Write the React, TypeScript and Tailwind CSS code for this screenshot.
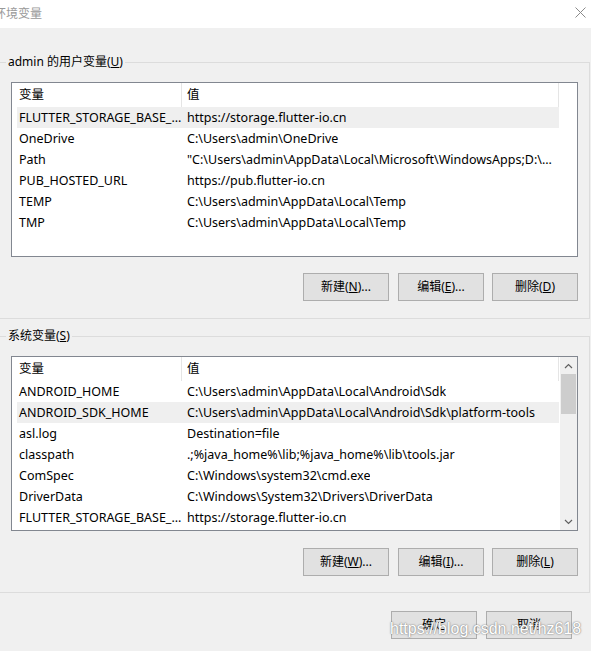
import React from "react";

type Row = [string, string, boolean?];

const rows1: Row[] = [
  ["FLUTTER_STORAGE_BASE_...", "https://storage.flutter-io.cn", true],
  ["OneDrive", "C:\\Users\\admin\\OneDrive"],
  ["Path", "\"C:\\Users\\admin\\AppData\\Local\\Microsoft\\WindowsApps;D:\\..."],
  ["PUB_HOSTED_URL", "https://pub.flutter-io.cn"],
  ["TEMP", "C:\\Users\\admin\\AppData\\Local\\Temp"],
  ["TMP", "C:\\Users\\admin\\AppData\\Local\\Temp"],
];

const rows2: Row[] = [
  ["ANDROID_HOME", "C:\\Users\\admin\\AppData\\Local\\Android\\Sdk"],
  ["ANDROID_SDK_HOME", "C:\\Users\\admin\\AppData\\Local\\Android\\Sdk\\platform-tools", true],
  ["asl.log", "Destination=file"],
  ["classpath", ".;%java_home%\\lib;%java_home%\\lib\\tools.jar"],
  ["ComSpec", "C:\\Windows\\system32\\cmd.exe"],
  ["DriverData", "C:\\Windows\\System32\\Drivers\\DriverData"],
  ["FLUTTER_STORAGE_BASE_...", "https://storage.flutter-io.cn"],
];

function Btn({ children }: { children: React.ReactNode }) {
  return (
    <div className="w-[86px] h-[28px] shrink-0 border border-[#adadad] bg-[#e1e1e1] flex items-center justify-center text-[12px] leading-none text-black">
      {children}
    </div>
  );
}

function List({ rows, scroll }: { rows: Row[]; scroll?: boolean }) {
  return (
    <div className="w-[567px] h-[175px] border border-[#828790] bg-white flex overflow-hidden">
      <div className="w-[547px] shrink-0 flex flex-col">
        <div className="h-[24px] shrink-0 flex border-r border-[#e5e5e5] w-[547px]">
          <div className="w-[170px] shrink-0 border-r border-[#e5e5e5] pl-[7px] pt-[1px] flex items-center">变量</div>
          <div className="pl-[5px] pt-[1px] flex items-center">值</div>
        </div>
        {rows.map(([k, v, sel], i) => (
          <div
            key={i}
            className={`h-[21px] shrink-0 ml-[5px] pt-[1px] flex items-center whitespace-nowrap ${sel ? "bg-[#efefef]" : ""}`}
          >
            <div className="w-[170px] shrink-0 pl-[2px] overflow-hidden">{k}</div>
            <div className="overflow-hidden">{v}</div>
          </div>
        ))}
      </div>
      {scroll && (
        <div className="w-[17px] shrink-0 ml-auto bg-[#f0f0f0] flex flex-col items-center">
          <div className="h-[17px] w-full flex items-center justify-center">
            <svg width="9" height="6" viewBox="0 0 9 6">
              <path d="M1 5 L4.5 1.5 L8 5" stroke="#606060" strokeWidth="1.2" fill="none" />
            </svg>
          </div>
          <div className="w-[15px] h-[40px] bg-[#cdcdcd]" />
          <div className="flex-1" />
          <div className="h-[17px] w-full flex items-center justify-center">
            <svg width="9" height="6" viewBox="0 0 9 6">
              <path d="M1 1 L4.5 4.5 L8 1" stroke="#606060" strokeWidth="1.2" fill="none" />
            </svg>
          </div>
        </div>
      )}
    </div>
  );
}

function Group({
  label,
  children,
  last,
}: {
  label: React.ReactNode;
  children: React.ReactNode;
  last?: boolean;
}) {
  return (
    <div
      className={`relative ml-[-3px] w-[593px] border border-[#dcdcdc] pt-[19px] pl-[13px] pr-[11px] ${
        last ? "pb-[16px]" : "pb-[17px]"
      }`}
    >
      <div className="absolute left-[8px] top-[-9px] px-[2px] bg-[#f0f0f0] leading-[16px] text-[12px] text-black">
        {label}
      </div>
      {children}
    </div>
  );
}

export default function App() {
  return (
    <div className="w-[591px] h-[651px] bg-[#f0f0f0] overflow-hidden relative flex flex-col text-[12.5px] text-black font-['Noto_Sans','Noto_Sans_CJK_SC',sans-serif]">
      <div className="h-[28px] shrink-0 bg-white flex items-center relative">
        <span className="ml-[-6px] text-[12px] text-[#999999]">环境变量</span>
        <svg className="absolute left-[575px] top-[7px]" width="11" height="11" viewBox="0 0 11 11">
          <path d="M0.5 0.5 L10.5 10.5 M10.5 0.5 L0.5 10.5" stroke="#8a8a8a" strokeWidth="1" />
        </svg>
      </div>

      <div className="mt-[34px]">
        <Group
          label={
            <span>
              admin 的用户变量(<span className="underline">U</span>)
            </span>
          }
        >
          <List rows={rows1} />
          <div className="mt-[16px] flex justify-end">
            <Btn>
              新建(<span className="underline">N</span>)...
            </Btn>
            <div className="w-[9px]" />
            <Btn>
              编辑(<span className="underline">E</span>)...
            </Btn>
            <div className="w-[8px]" />
            <Btn>
              删除(<span className="underline">D</span>)
            </Btn>
          </div>
        </Group>
      </div>

      <div className="mt-[17px]">
        <Group
          last
          label={
            <span>
              系统变量(<span className="underline">S</span>)
            </span>
          }
        >
          <List rows={rows2} scroll />
          <div className="mt-[17px] flex justify-end">
            <Btn>
              新建(<span className="underline">W</span>)...
            </Btn>
            <div className="w-[9px]" />
            <Btn>
              编辑(<span className="underline">I</span>)...
            </Btn>
            <div className="w-[8px]" />
            <Btn>
              删除(<span className="underline">L</span>)
            </Btn>
          </div>
        </Group>
      </div>

      <div className="mt-[18px] flex justify-end pr-[19px]">
        <Btn>确定</Btn>
        <div className="w-[9px]" />
        <Btn>取消</Btn>
      </div>

      <div className="absolute left-[390px] top-[619px] text-[16px] leading-[20px] text-white font-['Liberation_Sans',sans-serif] [text-shadow:0_0_2px_#777,0_0_1px_#999] whitespace-nowrap">
        https://blog.csdn.net/hz618
      </div>
    </div>
  );
}
